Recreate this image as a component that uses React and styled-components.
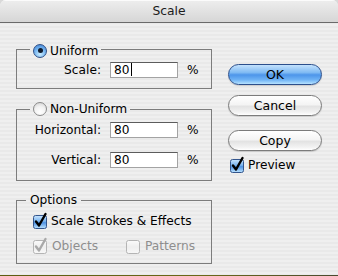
import React from "react";
import styled, { createGlobalStyle } from "styled-components";

const GlobalStyle = createGlobalStyle`
  html, body {
    margin: 0;
    padding: 0;
    width: 338px;
    height: 276px;
    overflow: hidden;
    background: #d9d9d9;
  }
`;

const Window = styled.div`
  width: 338px;
  height: 276px;
  display: flex;
  flex-direction: column;
  border-radius: 6px 6px 0 0;
  overflow: hidden;
  background: repeating-linear-gradient(
    to bottom,
    #efefef 0px,
    #efefef 2px,
    #e9e9e9 2px,
    #e9e9e9 4px
  );
  font-family: "DejaVu Sans", "Liberation Sans", sans-serif;
  font-size: 12.2px;
  color: #000;
`;

const TitleBar = styled.div`
  height: 22px;
  flex: none;
  display: flex;
  align-items: center;
  justify-content: center;
  border-bottom: 1px solid #6a6a6a;
  background: linear-gradient(to bottom, #eeeeee, #d6d6d6);
  box-shadow: inset 0 1px 0 #fbfbfb;
  font-size: 12.3px;
  color: #1c1c1c;
`;

const Body = styled.div`
  flex: 1;
  display: flex;
  align-items: flex-start;
  gap: 16px;
  padding: 18px 0 0 16px;
`;

const Desktop = styled.div`
  height: 1px;
  flex: none;
  background: linear-gradient(to right, #5c5c10, #6a6818 60%, #4a4a30);
`;

const LeftColumn = styled.div`
  width: 196px;
  display: flex;
  flex-direction: column;
`;

const Group = styled.fieldset`
  margin: ${(p) => p.$top}px 0 0 0;
  padding: 0;
  min-width: 0;
  border: 1px solid #7c7c7c;
`;

const Legend = styled.legend`
  margin-left: ${(p) => p.$indent}px;
  padding: 0 ${(p) => p.$pad}px;
  height: 16px;
  line-height: 16px;
`;

const LegendInner = styled.span`
  display: inline-flex;
  align-items: center;
  gap: 3px;
  height: 16px;
`;

const GroupContent = styled.div`
  display: flex;
  flex-direction: column;
  gap: ${(p) => p.$gap || 0}px;
  padding: 5px 0 ${(p) => p.$bottom}px ${(p) => p.$left || 0}px;
`;

const FieldRow = styled.div`
  display: grid;
  grid-template-columns: 84px 68px auto;
  column-gap: 9px;
  align-items: center;
  height: 16px;
`;

const Label = styled.span`
  text-align: right;
`;

const Field = styled.div`
  box-sizing: border-box;
  height: 16px;
  padding: 0 3px;
  line-height: 14px;
  background: #fff;
  border: 1px solid #a3a3a3;
  border-top-color: #5c5c5c;
  white-space: nowrap;
`;

const Caret = styled.span`
  display: inline-block;
  width: 1px;
  height: 13px;
  margin-left: 1px;
  vertical-align: -2px;
  background: #000;
`;

const CheckRow = styled.div`
  display: grid;
  grid-template-columns: ${(p) => p.$cols};
  align-items: center;
  height: 16px;
`;

const CheckItem = styled.span`
  display: inline-flex;
  align-items: center;
  gap: ${(p) => p.$gap}px;
  color: ${(p) => (p.$disabled ? "#8e8e8e" : "#000")};
`;

const RightColumn = styled.div`
  width: 94px;
  display: flex;
  flex-direction: column;
  padding-top: 23px;
`;

const Button = styled.div`
  box-sizing: border-box;
  height: 21px;
  margin-top: ${(p) => p.$top}px;
  border-radius: 11px;
  display: flex;
  align-items: center;
  justify-content: center;
  font-size: 12.5px;
  border: 1px solid ${(p) => (p.$default ? "#2c4f8c" : "#7b7b7b")};
  background: ${(p) =>
    p.$default
      ? "linear-gradient(to bottom, #c4e2fd 0%, #7fbaf3 40%, #4d95ea 52%, #6fb3f5 78%, #b6e2ff 100%)"
      : "linear-gradient(to bottom, #ffffff 0%, #f4f4f4 45%, #e3e3e3 55%, #f2f2f2 85%, #ffffff 100%)"};
  box-shadow: 0 1px 1px rgba(0, 0, 0, 0.15);
`;

const PreviewRow = styled.div`
  margin: 6px 0 0 2px;
  height: 16px;
  display: flex;
  align-items: center;
  gap: 3px;
`;

const RadioDot = styled.span`
  box-sizing: border-box;
  width: 14px;
  height: 14px;
  border-radius: 50%;
  display: inline-flex;
  align-items: center;
  justify-content: center;
  border: 1px solid ${(p) => (p.$on ? "#2f4f86" : "#8a8a8a")};
  background: ${(p) =>
    p.$on
      ? "radial-gradient(circle at 50% 75%, #c9ecff 0%, #6fb0ee 55%, #3f7fd0 100%)"
      : "radial-gradient(circle at 50% 75%, #ffffff 0%, #f2f2f2 50%, #cfcfcf 100%)"};

  &::after {
    content: "";
    width: 5px;
    height: 5px;
    border-radius: 50%;
    background: #0f1a2c;
    display: ${(p) => (p.$on ? "block" : "none")};
  }
`;

const BoxSvg = styled.svg`
  display: block;
  flex: none;
  overflow: visible;
`;

const CheckBox = ({ checked, disabled }) => {
  const fill = disabled ? "url(#cbGray)" : checked ? "url(#cbBlue)" : "url(#cbWhite)";
  const stroke = disabled ? "#b4b4b4" : checked ? "#33558c" : "#8a8a8a";
  return (
    <BoxSvg width="15" height="16" viewBox="0 0 15 16">
      <defs>
        <linearGradient id="cbBlue" x1="0" y1="0" x2="0" y2="1">
          <stop offset="0" stopColor="#cbe6ff" />
          <stop offset="0.45" stopColor="#78b3ee" />
          <stop offset="0.55" stopColor="#4f92e2" />
          <stop offset="1" stopColor="#bde4ff" />
        </linearGradient>
        <linearGradient id="cbGray" x1="0" y1="0" x2="0" y2="1">
          <stop offset="0" stopColor="#fbfbfb" />
          <stop offset="0.5" stopColor="#eeeeee" />
          <stop offset="1" stopColor="#f8f8f8" />
        </linearGradient>
        <linearGradient id="cbWhite" x1="0" y1="0" x2="0" y2="1">
          <stop offset="0" stopColor="#ffffff" />
          <stop offset="0.5" stopColor="#eeeeee" />
          <stop offset="1" stopColor="#ffffff" />
        </linearGradient>
      </defs>
      <rect x="0.5" y="2.5" width="13" height="13" rx="2" fill={fill} stroke={stroke} />
      {checked && (
        <path
          d="M3 8.5 L6 12.5 L12.5 1"
          fill="none"
          stroke={disabled ? "#a9a9a9" : "#000"}
          strokeWidth="2.4"
          strokeLinecap="round"
          strokeLinejoin="round"
        />
      )}
    </BoxSvg>
  );
};

export default function App() {
  return (
    <>
      <GlobalStyle />
      <Window>
        <TitleBar>Scale</TitleBar>
        <Body>
          <LeftColumn>
            <Group $top={0}>
              <Legend $indent={13} $pad={3}>
                <LegendInner>
                  <RadioDot $on />
                  Uniform
                </LegendInner>
              </Legend>
              <GroupContent $bottom={10}>
                <FieldRow>
                  <Label>Scale:</Label>
                  <Field>
                    80
                    <Caret />
                  </Field>
                  <span>%</span>
                </FieldRow>
              </GroupContent>
            </Group>

            <Group $top={12}>
              <Legend $indent={13} $pad={3}>
                <LegendInner>
                  <RadioDot />
                  Non-Uniform
                </LegendInner>
              </Legend>
              <GroupContent $gap={14} $bottom={12}>
                <FieldRow>
                  <Label>Horizontal:</Label>
                  <Field>80</Field>
                  <span>%</span>
                </FieldRow>
                <FieldRow>
                  <Label>Vertical:</Label>
                  <Field>80</Field>
                  <span>%</span>
                </FieldRow>
              </GroupContent>
            </Group>

            <Group $top={11}>
              <Legend $indent={9} $pad={4}>
                <LegendInner>Options</LegendInner>
              </Legend>
              <GroupContent $gap={9} $bottom={9} $left={16}>
                <CheckRow $cols="auto">
                  <CheckItem $gap={3}>
                    <CheckBox checked />
                    Scale Strokes &amp; Effects
                  </CheckItem>
                </CheckRow>
                <CheckRow $cols="93px auto">
                  <CheckItem $gap={4} $disabled>
                    <CheckBox checked disabled />
                    Objects
                  </CheckItem>
                  <CheckItem $gap={4} $disabled>
                    <CheckBox disabled />
                    Patterns
                  </CheckItem>
                </CheckRow>
              </GroupContent>
            </Group>
          </LeftColumn>

          <RightColumn>
            <Button $default $top={0}>OK</Button>
            <Button $top={10}>Cancel</Button>
            <Button $top={14}>Copy</Button>
            <PreviewRow>
              <CheckBox checked />
              Preview
            </PreviewRow>
          </RightColumn>
        </Body>
        <Desktop />
      </Window>
    </>
  );
}
